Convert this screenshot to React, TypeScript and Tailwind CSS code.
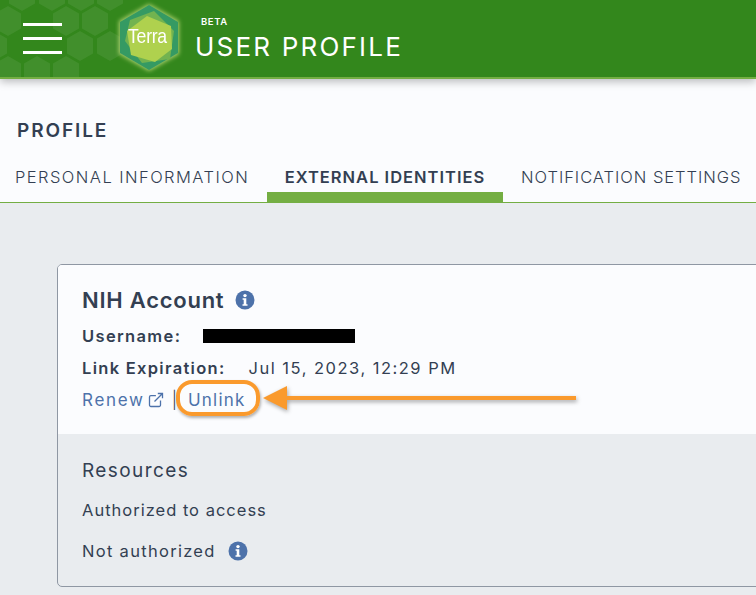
function hexPoints(cx: number, cy: number, r: number) {
  return [
    [cx, cy - r],
    [cx + r * 0.87, cy - r * 0.5],
    [cx + r * 0.87, cy + r * 0.5],
    [cx, cy + r],
    [cx - r * 0.87, cy + r * 0.5],
    [cx - r * 0.87, cy - r * 0.5],
  ]
    .map((p) => p.join(","))
    .join(" ");
}

function Hexes() {
  const pts: [number, number][] = [
    [22, -4], [52, -4], [81, -4], [110, -4],
    [8, 21], [66, 21], [95, 21],
    [-6, 46], [80, 46], [110, 46],
    [8, 71], [37, 71], [66, 71],
  ];
  return (
    <svg className="absolute left-0 top-0" width="135" height="77" viewBox="0 0 135 77">
      {pts.map(([x, y], i) => (
        <polygon key={i} points={hexPoints(x, y, 15)} fill="#ffffff" fillOpacity="0.07" />
      ))}
    </svg>
  );
}

function Logo() {
  return (
    <div className="relative h-[68px] w-[64px] shrink-0">
      <svg width="70" height="74" viewBox="-3 -3 70 74" className="absolute left-[-3px] top-[-3px]">
        <defs>
          <filter id="glow" x="-20%" y="-20%" width="140%" height="140%">
            <feGaussianBlur stdDeviation="2.2" />
          </filter>
        </defs>
        <polygon points="31,1 61,18 61,51 31,68 1,51 1,18" fill="#d5e88a" fillOpacity="0.75" filter="url(#glow)" />
        <polygon points="31,2 60,19 60,50 31,67 2,50 2,19" fill="#359a63" />
        <polygon points="36,8 56,28 52,56 24,60 7,38 12,17" fill="#72b350" />
        <polygon points="29,13 53,23 54,46 37,59 13,52 9,28" fill="#afd14e" />
      </svg>
      <span className="absolute left-[10px] top-[21px] origin-left font-['Liberation_Sans',sans-serif] text-[21px] leading-[24px] tracking-[-0.3px] text-white [transform:scaleX(0.84)]">
        Terra
      </span>
    </div>
  );
}

function Info({ className }: { className?: string }) {
  return (
    <svg width="20" height="20" viewBox="0 0 20 20" className={className}>
      <circle cx="10" cy="10" r="9.5" fill="#4d72aa" />
      <circle cx="10" cy="5.6" r="1.7" fill="#fff" />
      <path d="M7.6 8.3h3.7v6h1.2v1.5H7.5v-1.5h1.2V9.8H7.6z" fill="#fff" />
    </svg>
  );
}

function ExternalLink() {
  return (
    <svg width="16" height="16" viewBox="0 0 16 16" fill="none" stroke="#4d72aa" strokeWidth="1.3" className="ml-[3px]">
      <path d="M12.5 8.5v4.6a1.4 1.4 0 0 1-1.4 1.4H2.9a1.4 1.4 0 0 1-1.4-1.4V5a1.4 1.4 0 0 1 1.4-1.4h5" />
      <path d="M6.5 9.5 14.5 1.5M9.8 1.5h4.7v4.7" />
    </svg>
  );
}

function Arrow() {
  return (
    <svg width="320" height="40" viewBox="0 0 320 40" className="absolute left-[262px] top-[378px] drop-shadow-[1px_2px_2px_rgba(0,0,0,0.35)]">
      <polygon points="1,20 25,8 25,32" fill="#fa9a2d" />
      <rect x="24" y="18" width="290" height="4" fill="#fa9a2d" />
    </svg>
  );
}

export default function App() {
  return (
    <div className="relative h-[595px] w-[756px] overflow-hidden bg-[#e9ecef] font-['Inter','Noto_Sans',sans-serif] text-[#333f52]">
      <header className="relative z-10 flex h-[79px] items-center border-b-2 border-[#74ae43] bg-[#33871c] shadow-[0_3px_8px_rgba(0,0,0,0.25)]">
        <Hexes />
        <div className="relative ml-[23px] flex w-[39px] flex-col gap-[11px]">
          <div className="h-[3px] bg-white" />
          <div className="h-[3px] bg-white" />
          <div className="h-[3px] bg-white" />
        </div>
        <div className="relative ml-[56px] mt-[-4px]">
          <Logo />
        </div>
        <div className="relative ml-[13px] flex flex-col text-white">
          <span className="ml-[6px] text-[9.5px] font-semibold leading-[11px] tracking-[0.6px]">BETA</span>
          <span className="mt-[5px] whitespace-nowrap text-[26px] leading-[30px] tracking-[2.2px]">USER PROFILE</span>
        </div>
      </header>

      <section className="flex h-[124px] flex-col border-b border-[#74ae43] bg-[#fbfcfe]">
        <h1 className="ml-[17px] mt-[41px] text-[19px] font-semibold leading-[22px] tracking-[1.9px]">PROFILE</h1>
        <nav className="mt-[14px] flex h-[46px] items-stretch text-[16.5px]">
          <div className="ml-[15px] flex w-[252px] items-start whitespace-nowrap pt-[10px] font-light leading-[22px] tracking-[1.45px]">
            PERSONAL INFORMATION
          </div>
          <div className="flex w-[236px] items-start justify-center whitespace-nowrap border-b-[10px] border-[#74ae43] pt-[10px] font-semibold leading-[22px] tracking-[1px]">
            EXTERNAL IDENTITIES
          </div>
          <div className="ml-[18px] flex items-start whitespace-nowrap pt-[10px] font-light leading-[22px] tracking-[0.97px]">
            NOTIFICATION SETTINGS
          </div>
        </nav>
      </section>

      <main className="pl-[57px] pt-[61px]">
        <div className="h-[323px] w-[760px] overflow-hidden rounded-[5px] border border-[#8f97a3]">
          <div className="h-[169px] bg-[#fbfcfe] pl-[24px] pt-[21px]">
            <div className="flex items-center">
              <h2 className="text-[22px] font-semibold leading-[28px] tracking-[0.75px]">NIH Account</h2>
              <Info className="ml-[11px]" />
            </div>
            <div className="mt-[11px] flex items-center text-[16.5px] font-semibold leading-[22px]">
              <span className="tracking-[1.35px]">Username:</span>
              <span className="ml-[22px] h-[14px] w-[152px] bg-black" />
            </div>
            <div className="mt-[10px] flex items-center text-[16.5px] leading-[22px]">
              <span className="font-semibold tracking-[1.3px]">Link Expiration:</span>
              <span className="ml-[23px] tracking-[1.5px]">Jul 15, 2023, 12:29 PM</span>
            </div>
            <div className="mt-[10px] flex items-center text-[17px] leading-[22px] text-[#4d72aa]">
              <span className="tracking-[1.7px]">Renew</span>
              <ExternalLink />
              <span className="ml-[8px] font-light text-[#333f52]">|</span>
              <span className="ml-[11px] tracking-[1.2px]">Unlink</span>
            </div>
          </div>
          <div className="pl-[24px] pt-[25px]">
            <h3 className="text-[19px] leading-[24px] tracking-[1.4px]">Resources</h3>
            <p className="mt-[16px] text-[16.5px] leading-[22px] tracking-[1px]">Authorized to access</p>
            <div className="mt-[19px] flex items-center text-[16.5px] leading-[22px] tracking-[1.3px]">
              <span>Not authorized</span>
              <Info className="ml-[12px]" />
            </div>
          </div>
        </div>
      </main>

      <div className="absolute left-[176px] top-[380px] h-[36px] w-[84px] rounded-[16px] border-[4px] border-[#fa9a2d] shadow-[1px_2px_3px_rgba(0,0,0,0.3)]" />
      <Arrow />
    </div>
  );
}
